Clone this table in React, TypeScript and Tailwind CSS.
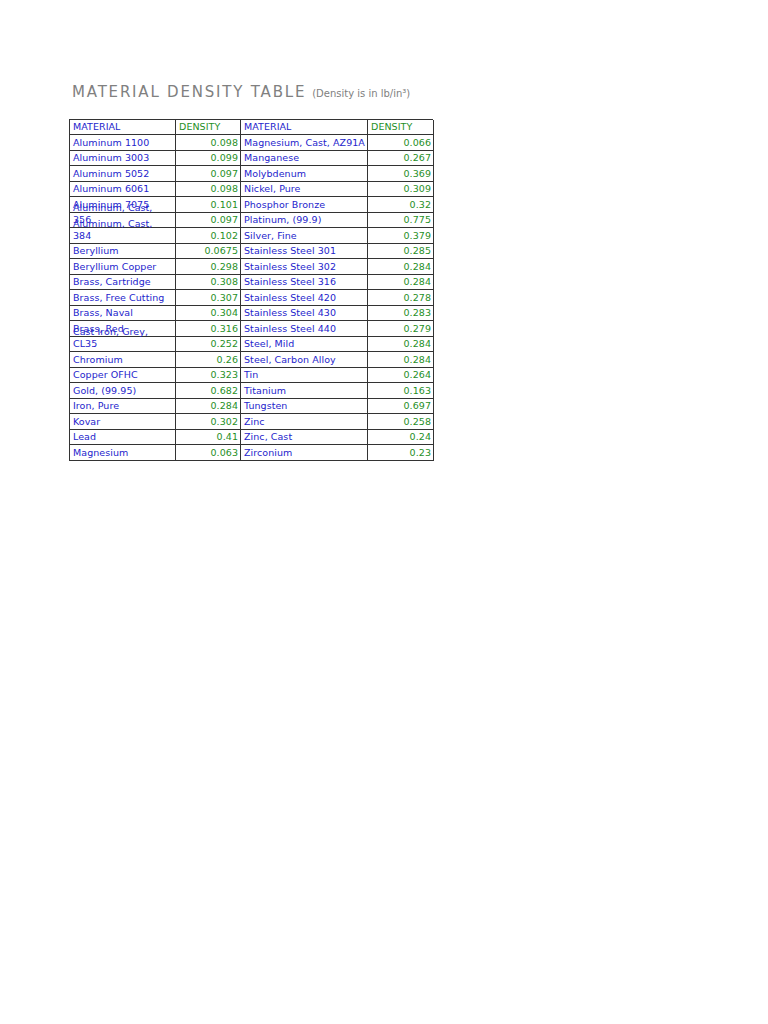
import React from "react";

const left: [string, string][] = [
  ["Aluminum 1100", "0.098"],
  ["Aluminum 3003", "0.099"],
  ["Aluminum 5052", "0.097"],
  ["Aluminum 6061", "0.098"],
  ["Aluminum 7075", "0.101"],
  ["Aluminum, Cast,\n356", "0.097"],
  ["Aluminum, Cast,\n384", "0.102"],
  ["Beryllium", "0.0675"],
  ["Beryllium Copper", "0.298"],
  ["Brass, Cartridge", "0.308"],
  ["Brass, Free Cutting", "0.307"],
  ["Brass, Naval", "0.304"],
  ["Brass, Red", "0.316"],
  ["Cast Iron, Grey,\nCL35", "0.252"],
  ["Chromium", "0.26"],
  ["Copper OFHC", "0.323"],
  ["Gold, (99.95)", "0.682"],
  ["Iron, Pure", "0.284"],
  ["Kovar", "0.302"],
  ["Lead", "0.41"],
  ["Magnesium", "0.063"],
];

const right: [string, string][] = [
  ["Magnesium, Cast, AZ91A", "0.066"],
  ["Manganese", "0.267"],
  ["Molybdenum", "0.369"],
  ["Nickel, Pure", "0.309"],
  ["Phosphor Bronze", "0.32"],
  ["Platinum, (99.9)", "0.775"],
  ["Silver, Fine", "0.379"],
  ["Stainless Steel 301", "0.285"],
  ["Stainless Steel 302", "0.284"],
  ["Stainless Steel 316", "0.284"],
  ["Stainless Steel 420", "0.278"],
  ["Stainless Steel 430", "0.283"],
  ["Stainless Steel 440", "0.279"],
  ["Steel, Mild", "0.284"],
  ["Steel, Carbon Alloy", "0.284"],
  ["Tin", "0.264"],
  ["Titanium", "0.163"],
  ["Tungsten", "0.697"],
  ["Zinc", "0.258"],
  ["Zinc, Cast", "0.24"],
  ["Zirconium", "0.23"],
];

function NameCell({ text }: { text: string }) {
  const lines = text.split("\n");
  return (
    <div className="h-[15.5px] border-r border-b border-[#333333] flex flex-col justify-end pl-[3px] pb-[1px] text-[#2424cc] overflow-visible whitespace-nowrap">
      {lines.map((l, i) => (
        <span key={i} className="block leading-[12px]">
          {l}
        </span>
      ))}
    </div>
  );
}

function NumCell({ text }: { text: string }) {
  return (
    <div className="h-[15.5px] border-r border-b border-[#333333] flex flex-col justify-end items-end pr-[2px] pb-[1px] text-[#1f8f1f] whitespace-nowrap">
      <span className="block leading-[12px]">{text}</span>
    </div>
  );
}

export default function App() {
  return (
    <div className="min-h-[1024px] w-[768px] bg-white pt-[83px] pl-[69px] font-['DejaVu_Sans',sans-serif]">
      <div className="flex items-baseline pl-[3px] text-[#808080]">
        <span className="text-[15px] leading-[18px] tracking-[1.8px]">MATERIAL DENSITY TABLE</span>
        <span className="ml-[6px] text-[10px]">(Density is in lb/in³)</span>
      </div>
      <div className="mt-[17.5px] grid w-[364px] grid-cols-[106px_65px_127px_66px] border-t border-l border-[#333333] text-[9.5px] tracking-[0.06px]">
        <div className="h-[15.5px] border-r border-b border-[#333333] flex flex-col justify-end pl-[3px] pb-[1px] text-[#2424cc]">
          <span className="block leading-[12px]">MATERIAL</span>
        </div>
        <div className="h-[15.5px] border-r border-b border-[#333333] flex flex-col justify-end pl-[3px] pb-[1px] text-[#1f8f1f]">
          <span className="block leading-[12px]">DENSITY</span>
        </div>
        <div className="h-[15.5px] border-r border-b border-[#333333] flex flex-col justify-end pl-[3px] pb-[1px] text-[#2424cc]">
          <span className="block leading-[12px]">MATERIAL</span>
        </div>
        <div className="h-[15.5px] border-r border-b border-[#333333] flex flex-col justify-end pl-[3px] pb-[1px] text-[#1f8f1f]">
          <span className="block leading-[12px]">DENSITY</span>
        </div>
        {left.map((row, i) => (
          <React.Fragment key={i}>
            <NameCell text={row[0]} />
            <NumCell text={row[1]} />
            <NameCell text={right[i][0]} />
            <NumCell text={right[i][1]} />
          </React.Fragment>
        ))}
      </div>
    </div>
  );
}
